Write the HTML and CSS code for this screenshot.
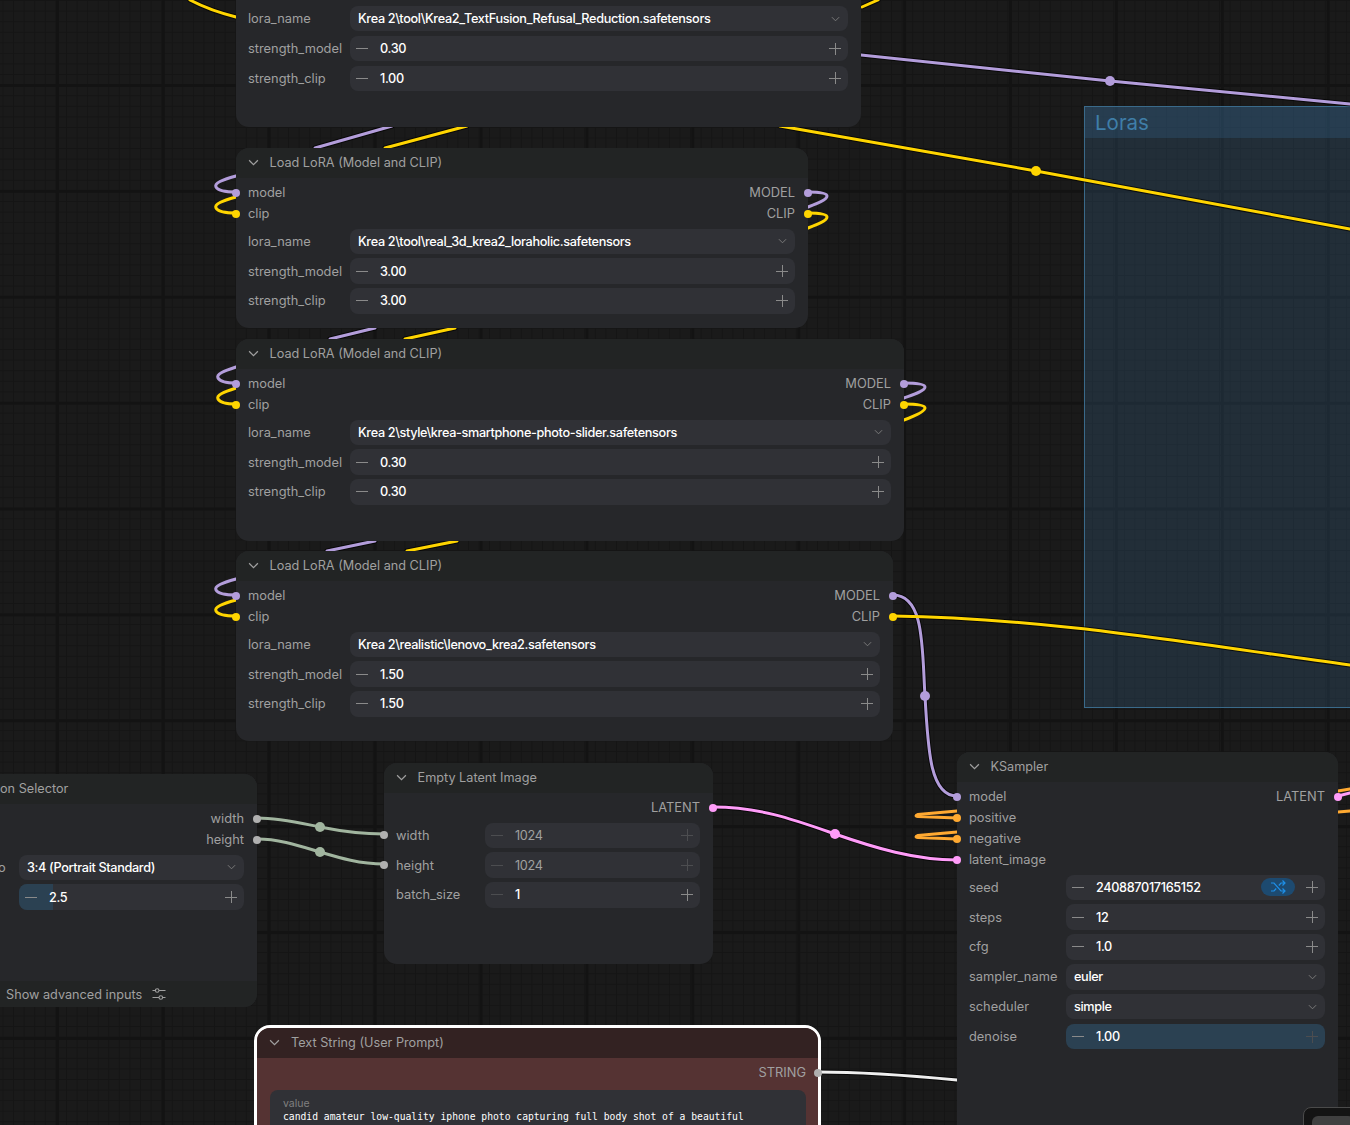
FILE: index.html
```html
<!DOCTYPE html>
<html lang="en">
<head>
  <meta charset="UTF-8">
  <title>Workflow</title>
  <link rel="stylesheet" href="styles.css">
</head>
<body>
  <div class="canvas">
    <div class="group group-loras"><div class="group-title">Loras</div></div>

    <svg class="wires" width="1350" height="1125" viewBox="0 0 1350 1125" fill="none">
      <g class="wire-shadow">
        <path d="M861 55 L1110 81 L1350 104"/>
        <path d="M780 126 L1036 171 L1350 229"/>
        <path d="M190 0 C205 8 220 13 236 17"/>
        <path d="M862 7 L878 0"/>
        <path d="M315 148 L392 126"/><path d="M385 148 L467 126"/>
        <path d="M330 339 L375 328"/><path d="M405 339 L455 328"/>
        <path d="M327 551 L375 541"/><path d="M407 551 L457 541"/>
        <path d="M893 595 C925 595 922 650 925 696 C928 750 930 796 957 796"/>
        <path d="M893 616 C1050 618 1200 645 1350 665"/>
        <path d="M713 807 C760 807 795 820 835 834 C875 848 915 860 957 860"/>
        <path d="M818 1072 C870 1072 915 1076 957 1080"/>
      </g>
      <g class="wire-purple">
        <path d="M861 55 L1110 81 L1350 104"/>
        <path d="M315 148 L392 126"/>
        <path d="M330 339 L375 328"/>
        <path d="M327 551 L375 541"/>
        <path d="M236 176 C222 180 214 183 216 187 C218 191 228 192 236 192"/>
        <path d="M236 367 C224 371 216 374 218 378 C220 382 228 383 236 383"/>
        <path d="M236 579 C222 583 214 586 216 590 C218 594 228 595 236 595"/>
        <path d="M808 192 C820 192 827 193 827 196 C827 200 816 204 808 207"/>
        <path d="M904 383 C916 383 925 384 925 387 C925 391 912 395 904 398"/>
        <path d="M893 595 C925 595 922 650 925 696 C928 750 930 796 957 796"/>
      </g>
      <g class="wire-yellow">
        <path d="M780 126 L1036 171 L1350 229"/>
        <path d="M190 0 C205 8 220 13 236 17"/>
        <path d="M862 7 L878 0"/>
        <path d="M385 148 L467 126"/>
        <path d="M405 339 L455 328"/>
        <path d="M407 551 L457 541"/>
        <path d="M236 197 C222 201 214 204 216 208 C218 212 228 213 236 213"/>
        <path d="M236 388 C224 392 216 395 218 399 C220 403 228 404 236 404"/>
        <path d="M236 600 C222 604 214 607 216 611 C218 615 228 616 236 616"/>
        <path d="M808 213 C820 213 827 214 827 217 C827 221 816 225 808 228"/>
        <path d="M904 404 C916 404 925 405 925 408 C925 412 912 417 904 420"/>
        <path d="M893 616 C1050 618 1200 645 1350 665"/>
      </g>
      <g class="wire-green">
        <path d="M257 818 C280 818 300 823 320 827 C340 831 360 834 384 834"/>
        <path d="M257 839 C280 839 300 846 320 852 C340 858 360 864 384 864"/>
      </g>
      <g class="wire-pink">
        <path d="M713 807 C760 807 795 820 835 834 C875 848 915 860 957 860"/>
        <path d="M1338 796 L1350 793"/>
      </g>
      <g class="wire-orange">
        <path d="M957 811 L918 814.500 Q914 816 918 816.500 L957 818"/>
        <path d="M957 832 L918 835.500 Q914 837 918 837.500 L957 839"/>
        <path d="M1338 791 L1350 789"/>
        <path d="M1338 812 L1350 811"/>
      </g>
      <path class="wire-white" d="M818 1072 C870 1072 915 1076 957 1080"/>
      <circle class="dot-purple" cx="1110" cy="81" r="5"/>
      <circle class="dot-yellow" cx="1036" cy="171" r="5"/>
      <circle class="dot-purple" cx="925" cy="696" r="5"/>
      <circle class="dot-green" cx="320" cy="827" r="5"/>
      <circle class="dot-green" cx="320" cy="852" r="5"/>
      <circle class="dot-pink" cx="835" cy="834" r="5"/>
    </svg>

    <!-- top lora node, header is scrolled off -->
    <section class="node node-lora-1">
      <div class="node-body">
        <div class="row"><span class="label">lora_name</span>
          <div class="widget combo"><span class="value">Krea 2\tool\Krea2_TextFusion_Refusal_Reduction.safetensors</span><svg class="chev" viewBox="0 0 10 6"><path d="M1 1l4 4 4-4"/></svg></div></div>
        <div class="row"><span class="label">strength_model</span>
          <div class="widget"><i class="minus"></i><span class="value">0.30</span><i class="plus"></i></div></div>
        <div class="row"><span class="label">strength_clip</span>
          <div class="widget"><i class="minus"></i><span class="value">1.00</span><i class="plus"></i></div></div>
      </div>
    </section>

    <section class="node node-lora-2">
      <header class="node-head"><svg class="chev head-chev" viewBox="0 0 10 6"><path d="M1 1l4 4 4-4"/></svg>Load LoRA (Model and CLIP)</header>
      <div class="node-body">
        <div class="slots">
          <div class="slot-row"><span class="slot in purple">model</span><span class="slot out purple">MODEL</span></div>
          <div class="slot-row"><span class="slot in yellow">clip</span><span class="slot out yellow">CLIP</span></div>
        </div>
        <div class="row"><span class="label">lora_name</span>
          <div class="widget combo"><span class="value">Krea 2\tool\real_3d_krea2_loraholic.safetensors</span><svg class="chev" viewBox="0 0 10 6"><path d="M1 1l4 4 4-4"/></svg></div></div>
        <div class="row"><span class="label">strength_model</span>
          <div class="widget"><i class="minus"></i><span class="value">3.00</span><i class="plus"></i></div></div>
        <div class="row"><span class="label">strength_clip</span>
          <div class="widget"><i class="minus"></i><span class="value">3.00</span><i class="plus"></i></div></div>
      </div>
    </section>

    <section class="node node-lora-3">
      <header class="node-head"><svg class="chev head-chev" viewBox="0 0 10 6"><path d="M1 1l4 4 4-4"/></svg>Load LoRA (Model and CLIP)</header>
      <div class="node-body">
        <div class="slots">
          <div class="slot-row"><span class="slot in purple">model</span><span class="slot out purple">MODEL</span></div>
          <div class="slot-row"><span class="slot in yellow">clip</span><span class="slot out yellow">CLIP</span></div>
        </div>
        <div class="row"><span class="label">lora_name</span>
          <div class="widget combo"><span class="value">Krea 2\style\krea-smartphone-photo-slider.safetensors</span><svg class="chev" viewBox="0 0 10 6"><path d="M1 1l4 4 4-4"/></svg></div></div>
        <div class="row"><span class="label">strength_model</span>
          <div class="widget"><i class="minus"></i><span class="value">0.30</span><i class="plus"></i></div></div>
        <div class="row"><span class="label">strength_clip</span>
          <div class="widget"><i class="minus"></i><span class="value">0.30</span><i class="plus"></i></div></div>
      </div>
    </section>

    <section class="node node-lora-4">
      <header class="node-head"><svg class="chev head-chev" viewBox="0 0 10 6"><path d="M1 1l4 4 4-4"/></svg>Load LoRA (Model and CLIP)</header>
      <div class="node-body">
        <div class="slots">
          <div class="slot-row"><span class="slot in purple">model</span><span class="slot out purple">MODEL</span></div>
          <div class="slot-row"><span class="slot in yellow">clip</span><span class="slot out yellow">CLIP</span></div>
        </div>
        <div class="row"><span class="label">lora_name</span>
          <div class="widget combo"><span class="value">Krea 2\realistic\lenovo_krea2.safetensors</span><svg class="chev" viewBox="0 0 10 6"><path d="M1 1l4 4 4-4"/></svg></div></div>
        <div class="row"><span class="label">strength_model</span>
          <div class="widget"><i class="minus"></i><span class="value">1.50</span><i class="plus"></i></div></div>
        <div class="row"><span class="label">strength_clip</span>
          <div class="widget"><i class="minus"></i><span class="value">1.50</span><i class="plus"></i></div></div>
      </div>
    </section>

    <section class="node node-selector">
      <header class="node-head"><svg class="chev head-chev" viewBox="0 0 10 6"><path d="M1 1l4 4 4-4"/></svg>Resolution Selector</header>
      <div class="node-body">
        <div class="slots">
          <div class="slot-row end"><span class="slot out grey">width</span></div>
          <div class="slot-row end"><span class="slot out grey">height</span></div>
        </div>
        <div class="row"><span class="label">aspect_ratio</span>
          <div class="widget combo"><span class="value">3:4 (Portrait Standard)</span><svg class="chev" viewBox="0 0 10 6"><path d="M1 1l4 4 4-4"/></svg></div></div>
        <div class="row"><span class="label">megapixel</span>
          <div class="widget slider"><i class="slider-fill"></i><i class="minus"></i><span class="value">2.5</span><i class="plus"></i></div></div>
      </div>
      <footer class="node-foot">Show advanced inputs
        <svg class="sliders" viewBox="0 0 14 14"><path d="M0.5 3.5h3M7 3.5h6.5M0.5 10.5h6.500M10.500 10.500h3"/><circle cx="5.200" cy="3.500" r="1.800"/><circle cx="8.800" cy="10.500" r="1.800"/></svg>
      </footer>
    </section>

    <section class="node node-latent">
      <header class="node-head"><svg class="chev head-chev" viewBox="0 0 10 6"><path d="M1 1l4 4 4-4"/></svg>Empty Latent Image</header>
      <div class="node-body">
        <div class="slots">
          <div class="slot-row end"><span class="slot out pink">LATENT</span></div>
        </div>
        <div class="row wired"><span class="label slot in grey">width</span>
          <div class="widget dim"><i class="minus"></i><span class="value">1024</span><i class="plus"></i></div></div>
        <div class="row wired"><span class="label slot in grey">height</span>
          <div class="widget dim"><i class="minus"></i><span class="value">1024</span><i class="plus"></i></div></div>
        <div class="row"><span class="label">batch_size</span>
          <div class="widget at-min"><i class="minus"></i><span class="value">1</span><i class="plus"></i></div></div>
      </div>
    </section>

    <section class="node node-ksampler">
      <header class="node-head"><svg class="chev head-chev" viewBox="0 0 10 6"><path d="M1 1l4 4 4-4"/></svg>KSampler</header>
      <div class="node-body">
        <div class="slots">
          <div class="slot-row"><span class="slot in purple">model</span><span class="slot out pink">LATENT</span></div>
          <div class="slot-row"><span class="slot in orange">positive</span></div>
          <div class="slot-row"><span class="slot in orange">negative</span></div>
          <div class="slot-row"><span class="slot in pink">latent_image</span></div>
        </div>
        <div class="row"><span class="label">seed</span>
          <div class="widget"><i class="minus"></i><span class="value">240887017165152</span>
            <span class="shuffle"><svg viewBox="0 0 16 16"><path d="M1 4h3l7 8h4M1 12h3l2.200-2.500M8.800 6.500L11 4h4M12.500 1.500L15 4l-2.500 2.500M12.500 9.500L15 12l-2.500 2.500"/></svg></span>
            <i class="plus"></i></div></div>
        <div class="row"><span class="label">steps</span>
          <div class="widget"><i class="minus"></i><span class="value">12</span><i class="plus"></i></div></div>
        <div class="row"><span class="label">cfg</span>
          <div class="widget"><i class="minus"></i><span class="value">1.0</span><i class="plus"></i></div></div>
        <div class="row"><span class="label">sampler_name</span>
          <div class="widget combo"><span class="value">euler</span><svg class="chev" viewBox="0 0 10 6"><path d="M1 1l4 4 4-4"/></svg></div></div>
        <div class="row"><span class="label">scheduler</span>
          <div class="widget combo"><span class="value">simple</span><svg class="chev" viewBox="0 0 10 6"><path d="M1 1l4 4 4-4"/></svg></div></div>
        <div class="row"><span class="label">denoise</span>
          <div class="widget full at-max"><i class="minus"></i><span class="value">1.00</span><i class="plus"></i></div></div>
      </div>
    </section>

    <section class="node node-text">
      <header class="node-head"><svg class="chev head-chev" viewBox="0 0 10 6"><path d="M1 1l4 4 4-4"/></svg>Text String (User Prompt)</header>
      <div class="node-body">
        <div class="slots">
          <div class="slot-row end"><span class="slot out grey">STRING</span></div>
        </div>
        <div class="textarea">
          <span class="textarea-label">value</span>
          <span class="textarea-text">candid amateur low-quality iphone photo capturing full body shot of a beautiful</span>
        </div>
      </div>
    </section>

    <div class="corner-panel"><div class="corner-inner"></div></div>
  </div>
</body>
</html>
```

FILE: styles.css
```css
* {
  box-sizing: border-box;
}

html,
body {
  margin: 0;
  padding: 0;
  height: 100%;
  overflow: hidden;
  background: #191919;
}

.canvas {
  position: relative;
  width: 1350px;
  height: 1125px;
  overflow: hidden;
  font-family: Inter, "Noto Sans", sans-serif;
  font-size: 12.850px;
  color: #a0a0a0;
  background-color: #1a1a1a;
  background-image:
    linear-gradient(90deg, #131313 3px, transparent 3px),
    linear-gradient(#131313 3px, transparent 3px),
    linear-gradient(90deg, #151515 1px, transparent 1px),
    linear-gradient(#151515 1px, transparent 1px);
  background-size: 105.900px 105.900px, 105.900px 105.900px, 10.590px 10.590px, 10.590px 10.590px;
  background-position: 56px 84px, 56px 84px, 2.500px 0, 2.500px 0;
}

/* group box */
.group {
  position: absolute;
  border: 1px solid #3a6a8a;
  background: rgba(70, 130, 180, 0.2);
}

.group-loras {
  left: 1084px;
  top: 106px;
  width: 300px;
  height: 602px;
}

.group-title {
  height: 31px;
  padding-left: 10px;
  font-size: 20.500px;
  line-height: 31px;
  color: #3f7ea8;
  background: rgba(60, 120, 170, 0.22);
}

/* wires */
.wires {
  position: absolute;
  left: 0;
  top: 0;
}

.wires path {
  stroke-linecap: round;
}

.wire-shadow path {
  stroke: #000;
  stroke-width: 5;
  opacity: 0.7;
}

.wire-purple path {
  stroke: #b39ddb;
  stroke-width: 3;
}

.wire-yellow path {
  stroke: #ffd500;
  stroke-width: 3;
}

.wire-green path {
  stroke: #a1b59f;
  stroke-width: 3;
}

.wire-pink path {
  stroke: #ff9cf9;
  stroke-width: 3;
}

.wire-orange path {
  stroke: #ffa931;
  stroke-width: 3;
}

.wire-white {
  stroke: #eee;
  stroke-width: 3;
}

.dot-purple { fill: #b39ddb; }
.dot-yellow { fill: #ffd500; }
.dot-green { fill: #a1b59f; }
.dot-pink { fill: #ff9cf9; }

/* nodes */
.node {
  position: absolute;
  display: flex;
  flex-direction: column;
  background: #26272a;
  border-radius: 13px;
}

.node-lora-1 { left: 236px; top: -24px; width: 625px; height: 151px; padding-top: 26px; }
.node-lora-2 { left: 236px; top: 148px; width: 572px; height: 180px; }
.node-lora-3 { left: 236px; top: 339px; width: 668px; height: 202px; }
.node-lora-4 { left: 236px; top: 551px; width: 657px; height: 190px; }
.node-selector { left: -85px; top: 774px; width: 342px; height: 233px; }
.node-latent { left: 384px; top: 763px; width: 329px; height: 201px; }
.node-ksampler { left: 957px; top: 752px; width: 381px; height: 420px; }
.node-text { left: 254px; top: 1025px; width: 567px; height: 200px; background: #553333; border: 3px solid #fff; border-radius: 16px; }

.node-head {
  display: flex;
  align-items: center;
  height: 30px;
  padding: 0 0 1px 11.500px;
  border-radius: 13px 13px 0 0;
  font-size: 12.700px;
  color: #a0a0a0;
  background: #222424;
}

.node-selector .node-head {
  padding-left: 15.500px;
}

.node-text .node-head {
  height: 30px;
  padding-left: 12px;
  background: #332222;
}

.head-chev {
  margin-right: 11px;
}

.node-body {
  display: flex;
  flex: 1;
  flex-direction: column;
  gap: 4.500px;
  padding: 4px 13px 0 12px;
}

.node-selector .node-body {
  padding-left: 16.500px;
}

.node-text .node-body {
  padding: 4px 12px 0 13px;
}

.node-foot {
  display: flex;
  align-items: center;
  gap: 10px;
  height: 26px;
  padding-left: 91px;
  border-radius: 0 0 13px 13px;
  font-size: 12.700px;
  background: #222424;
}

.sliders {
  width: 14px;
  height: 14px;
  fill: none;
  stroke: #a0a0a0;
  stroke-width: 1.100;
}

/* slots */
.slots {
  display: flex;
  flex-direction: column;
}

.slot-row {
  display: flex;
  justify-content: space-between;
  height: 21px;
  line-height: 21px;
}

.slot-row.end {
  justify-content: flex-end;
}

.slot {
  position: relative;
}

.slot::before {
  content: "";
  position: absolute;
  top: 50%;
  width: 8px;
  height: 8px;
  margin-top: -4px;
  border-radius: 50%;
  background: var(--slot);
}

.slot.in::before { left: -16px; }
.slot.out::before { right: -17px; }
.node-text .slot.out::before { right: -16px; }

.purple { --slot: #b39ddb; }
.yellow { --slot: #ffd500; }
.grey { --slot: #b0b0b0; }
.pink { --slot: #ff9cf9; }
.orange { --slot: #ffa931; }

/* widget rows */
.row {
  display: flex;
  align-items: center;
  height: 25.400px;
}

.label {
  flex: 0 0 102px;
  white-space: nowrap;
}

.node-ksampler .label { flex-basis: 97px; }
.node-latent .label { flex-basis: 89px; }
.node-selector .label { flex-basis: 87.500px; }

.row .slot {
  line-height: 25px;
}

.widget {
  position: relative;
  display: flex;
  flex: 1;
  align-items: center;
  height: 100%;
  padding: 0 7px 0 6px;
  border-radius: 8px;
  background: #303136;
  overflow: hidden;
}

.widget.combo {
  padding: 0 8px 0 8px;
}

.value {
  position: relative;
  flex: 1;
  color: #fff;
  white-space: nowrap;
  letter-spacing: -0.350px;
  font-size: 12.700px;
  font-weight: 500;
}

.minus,
.plus {
  position: relative;
  flex: none;
  width: 12px;
  height: 12px;
}

.minus {
  margin-right: 12px;
}

.minus::before,
.plus::before,
.plus::after {
  content: "";
  position: absolute;
  left: 0;
  top: 5.500px;
  width: 12px;
  height: 1px;
  background: #8a8a8a;
}

.plus::after {
  left: 5.500px;
  top: 0;
  width: 1px;
  height: 12px;
}

.widget.dim .value { color: #a0a0a0; font-weight: 400; }
.widget.dim .minus::before,
.widget.dim .plus::before,
.widget.dim .plus::after,
.widget.at-min .minus::before,
.widget.at-max .plus::before,
.widget.at-max .plus::after {
  background: #4c4d50;
}

.widget.full {
  background: #2b4152;
}

.slider-fill {
  position: absolute;
  left: 0;
  top: 0;
  bottom: 0;
  width: 34px;
  background: #2b4152;
}

.chev {
  flex: none;
  width: 9px;
  height: 6px;
  fill: none;
  stroke: #7a7a7a;
  stroke-width: 1.100;
}

.head-chev {
  width: 11px;
  height: 7px;
  stroke: #a0a0a0;
}

.shuffle {
  display: flex;
  align-items: center;
  justify-content: center;
  width: 34px;
  height: 18px;
  margin-right: 11px;
  border-radius: 9px;
  background: #1d4a70;
}

.shuffle svg {
  width: 16px;
  height: 16px;
  fill: none;
  stroke: #1e8fe8;
  stroke-width: 1.200;
}

/* text box */
.textarea {
  display: flex;
  flex-direction: column;
  height: 120px;
  margin-top: 2px;
  padding: 8px 13px;
  border-radius: 8px;
  background: #303136;
}

.textarea-label {
  font-size: 10.500px;
  line-height: 12px;
  color: #808080;
}

.textarea-text {
  font-family: "DejaVu Sans Mono", monospace;
  font-size: 9.700px;
  line-height: 14px;
  color: #fff;
}

.corner-panel {
  position: absolute;
  left: 1303px;
  top: 1107px;
  width: 60px;
  height: 40px;
  padding: 8px;
  border: 1px solid #4a4a4a;
  border-radius: 8px;
  background: #141414;
}

.corner-inner {
  height: 30px;
  border-radius: 6px;
  background: #404040;
}
```
